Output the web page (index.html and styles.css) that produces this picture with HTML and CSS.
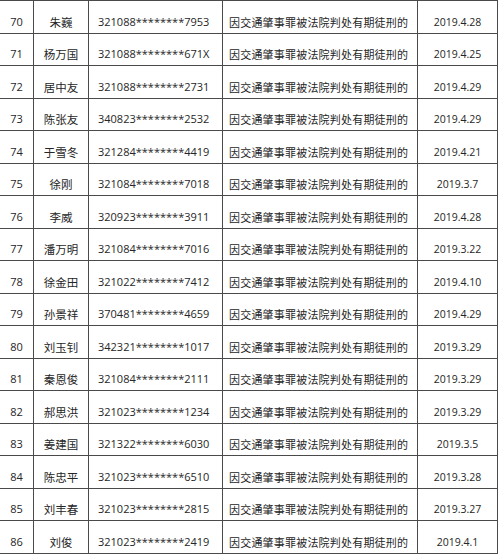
FILE: index.html
```html
<!DOCTYPE html>
<html lang="zh">
<head>
<meta charset="utf-8">
<link rel="stylesheet" href="styles.css">
</head>
<body>
<table class="list">
<colgroup>
<col class="c-no"><col class="c-name"><col class="c-id"><col class="c-desc"><col class="c-date">
</colgroup>
<tbody>
<tr><td class="no">70</td><td class="name">朱巍</td><td class="id">321088********7953</td><td class="desc">因交通肇事罪被法院判处有期徒刑的</td><td class="date">2019.4.28</td></tr>
<tr><td class="no">71</td><td class="name">杨万国</td><td class="id">321088********671X</td><td class="desc">因交通肇事罪被法院判处有期徒刑的</td><td class="date">2019.4.25</td></tr>
<tr><td class="no">72</td><td class="name">居中友</td><td class="id">321088********2731</td><td class="desc">因交通肇事罪被法院判处有期徒刑的</td><td class="date">2019.4.29</td></tr>
<tr><td class="no">73</td><td class="name">陈张友</td><td class="id">340823********2532</td><td class="desc">因交通肇事罪被法院判处有期徒刑的</td><td class="date">2019.4.29</td></tr>
<tr><td class="no">74</td><td class="name">于雪冬</td><td class="id">321284********4419</td><td class="desc">因交通肇事罪被法院判处有期徒刑的</td><td class="date">2019.4.21</td></tr>
<tr><td class="no">75</td><td class="name">徐刚</td><td class="id">321084********7018</td><td class="desc">因交通肇事罪被法院判处有期徒刑的</td><td class="date">2019.3.7</td></tr>
<tr><td class="no">76</td><td class="name">李威</td><td class="id">320923********3911</td><td class="desc">因交通肇事罪被法院判处有期徒刑的</td><td class="date">2019.4.28</td></tr>
<tr><td class="no">77</td><td class="name">潘万明</td><td class="id">321084********7016</td><td class="desc">因交通肇事罪被法院判处有期徒刑的</td><td class="date">2019.3.22</td></tr>
<tr><td class="no">78</td><td class="name">徐金田</td><td class="id">321022********7412</td><td class="desc">因交通肇事罪被法院判处有期徒刑的</td><td class="date">2019.4.10</td></tr>
<tr><td class="no">79</td><td class="name">孙景祥</td><td class="id">370481********4659</td><td class="desc">因交通肇事罪被法院判处有期徒刑的</td><td class="date">2019.4.29</td></tr>
<tr><td class="no">80</td><td class="name">刘玉钊</td><td class="id">342321********1017</td><td class="desc">因交通肇事罪被法院判处有期徒刑的</td><td class="date">2019.3.29</td></tr>
<tr><td class="no">81</td><td class="name">秦恩俊</td><td class="id">321084********2111</td><td class="desc">因交通肇事罪被法院判处有期徒刑的</td><td class="date">2019.3.29</td></tr>
<tr><td class="no">82</td><td class="name">郝思洪</td><td class="id">321023********1234</td><td class="desc">因交通肇事罪被法院判处有期徒刑的</td><td class="date">2019.3.29</td></tr>
<tr><td class="no">83</td><td class="name">姜建国</td><td class="id">321322********6030</td><td class="desc">因交通肇事罪被法院判处有期徒刑的</td><td class="date">2019.3.5</td></tr>
<tr><td class="no">84</td><td class="name">陈忠平</td><td class="id">321023********6510</td><td class="desc">因交通肇事罪被法院判处有期徒刑的</td><td class="date">2019.3.28</td></tr>
<tr><td class="no">85</td><td class="name">刘丰春</td><td class="id">321023********2815</td><td class="desc">因交通肇事罪被法院判处有期徒刑的</td><td class="date">2019.3.27</td></tr>
<tr><td class="no">86</td><td class="name">刘俊</td><td class="id">321023********2419</td><td class="desc">因交通肇事罪被法院判处有期徒刑的</td><td class="date">2019.4.1</td></tr>
</tbody>
</table>
</body>
</html>
```
FILE: styles.css
```css
html, body {
  margin: 0;
  padding: 0;
  background: #ffffff;
}
body {
  overflow: hidden;
}
.list {
  border-collapse: collapse;
  table-layout: fixed;
  width: 498px;
  margin: 0 0 0 -1px;
  color: #262626;
  font-family: "Open Sans", "Noto Sans CJK SC", sans-serif;
}
.c-no { width: 34px; }
.c-name { width: 55px; }
.c-id { width: 134px; }
.c-desc { width: 195px; }
.c-date { width: 80px; }
.list td {
  border: 1px solid #4a4a4a;
  height: 32.5px;
  box-sizing: border-box;
  padding: 10px 0 0 0;
  vertical-align: middle;
  white-space: nowrap;
  overflow: hidden;
  line-height: 14px;
}
.no {
  text-align: center;
  font-size: 11px;
}
.name {
  text-align: center;
  font-family: "Noto Sans CJK SC", sans-serif;
  font-size: 11.5px;
}
.id {
  padding-left: 9px !important;
  font-size: 11px;
}
.desc {
  padding-left: 6px !important;
  font-family: "Noto Sans CJK SC", sans-serif;
  font-size: 11px;
  letter-spacing: 0.2px;
}
.date {
  text-align: center;
  font-size: 10.5px;
}
```
